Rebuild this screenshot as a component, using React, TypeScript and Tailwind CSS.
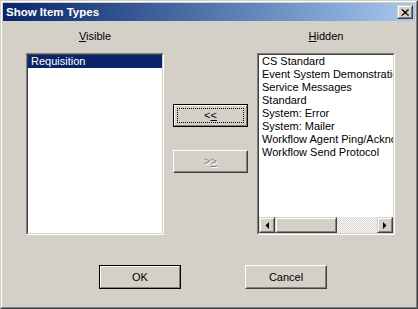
import React from "react";

function Sunken({ className, children }: { className: string; children?: React.ReactNode }) {
  return (
    <div className={"border border-t-[#808080] border-l-[#808080] border-r-white border-b-white " + className}>
      <div className="w-full h-full border border-t-[#404040] border-l-[#404040] border-r-[#d4d0c8] border-b-[#d4d0c8] bg-white flex flex-col overflow-hidden">
        {children}
      </div>
    </div>
  );
}

function Raised({ children }: { children?: React.ReactNode }) {
  return (
    <div className="w-full h-full border border-t-white border-l-white border-r-[#404040] border-b-[#404040]">
      <div className="w-full h-full border border-t-[#d4d0c8] border-l-[#d4d0c8] border-r-[#808080] border-b-[#808080] flex items-center justify-center">
        {children}
      </div>
    </div>
  );
}

function DefaultBtn({ children, focus }: { children?: React.ReactNode; focus?: boolean }) {
  return (
    <div className="w-full h-full border border-black">
      <div className="w-full h-full border border-t-white border-l-white border-r-[#808080] border-b-[#808080] p-[2px]">
        {focus ? (
          <div className="w-full h-full border border-dotted border-black flex items-center justify-center">{children}</div>
        ) : (
          <div className="w-full h-full flex items-center justify-center">{children}</div>
        )}
      </div>
    </div>
  );
}

function ScrollBtn({ dir }: { dir: "left" | "right" }) {
  return (
    <div className="w-[16px] h-[16px] shrink-0 border border-t-[#d4d0c8] border-l-[#d4d0c8] border-r-[#404040] border-b-[#404040]">
      <div className="w-full h-full border border-t-white border-l-white border-r-[#808080] border-b-[#808080] bg-[#d4d0c8] flex items-center justify-center">
        <svg width="4" height="7" viewBox="0 0 4 7">
          {dir === "left" ? (
            <polygon points="4,0 4,7 0.5,3.5" fill="#000" />
          ) : (
            <polygon points="0,0 0,7 3.5,3.5" fill="#000" />
          )}
        </svg>
      </div>
    </div>
  );
}

const hidden = [
  "CS Standard",
  "Event System Demonstration",
  "Service Messages",
  "Standard",
  "System: Error",
  "System: Mailer",
  "Workflow Agent Ping/Acknowledge",
  "Workflow Send Protocol",
];

export default function App() {
  return (
    <div className="w-[418px] h-[309px] bg-[#d4d0c8] font-['Liberation_Sans',Arial,sans-serif] text-[11px] leading-[13px] text-black select-none">
      <div className="w-full h-full border border-t-[#d4d0c8] border-l-[#d4d0c8] border-r-[#404040] border-b-[#404040]">
        <div className="w-full h-full border border-t-white border-l-white border-r-[#808080] border-b-[#808080] p-px flex flex-col">
          {/* Title bar */}
          <div className="h-[18px] shrink-0 flex items-center bg-linear-to-r from-[#0a246a] to-[#a6caf0] pl-[3px] pr-[2px]">
            <span className="flex-1 text-white font-bold text-[11.5px] leading-[14px]">Show Item Types</span>
            <div className="w-[16px] h-[14px] border border-t-[#d4d0c8] border-l-[#d4d0c8] border-r-[#404040] border-b-[#404040]">
              <div className="w-full h-full border border-t-white border-l-white border-r-[#808080] border-b-[#808080] bg-[#d4d0c8] flex items-center justify-center">
                <svg width="8" height="7" viewBox="0 0 8 7">
                  <path d="M0.5 0.5 L7 6.5 M1.5 0.5 L8 6.5 M7 0.5 L0.5 6.5 M8 0.5 L1.5 6.5" stroke="#000" strokeWidth="1" fill="none" />
                </svg>
              </div>
            </div>
          </div>

          {/* Client */}
          <div className="flex-1 flex flex-col">
            <div className="flex pl-[23px] pr-[20px] pt-[9px] gap-[9px]">
              {/* Visible */}
              <div className="w-[138px] flex flex-col">
                <div className="h-[13px] text-center">
                  <u>V</u>isible
                </div>
                <Sunken className="mt-[10px] h-[182px]">
                  <div className="h-[13px] bg-[#0a246a] text-white pl-[3px] whitespace-nowrap">Requisition</div>
                </Sunken>
              </div>

              {/* Middle buttons */}
              <div className="w-[75px] flex flex-col pt-[74px]">
                <div className="h-[23px]">
                  <DefaultBtn focus>
                    <span>
                      &lt;<u>&lt;</u>
                    </span>
                  </DefaultBtn>
                </div>
                <div className="h-[23px] mt-[23px]">
                  <Raised>
                    <span className="text-[#808080] [text-shadow:1px_1px_0_#ffffff]">
                      &gt;<u>&gt;</u>
                    </span>
                  </Raised>
                </div>
              </div>

              {/* Hidden */}
              <div className="w-[138px] flex flex-col">
                <div className="h-[13px] text-center">
                  <u>H</u>idden
                </div>
                <Sunken className="mt-[10px] h-[182px]">
                  <div className="flex-1 flex flex-col">
                    {hidden.map((t) => (
                      <div key={t} className="h-[13px] pl-[3px] whitespace-nowrap overflow-hidden">
                        {t}
                      </div>
                    ))}
                  </div>
                  <div className="h-[16px] shrink-0 flex">
                    <ScrollBtn dir="left" />
                    <div className="w-[62px] h-[16px] shrink-0 border border-t-[#d4d0c8] border-l-[#d4d0c8] border-r-[#404040] border-b-[#404040]">
                      <div className="w-full h-full border border-t-white border-l-white border-r-[#808080] border-b-[#808080] bg-[#d4d0c8]" />
                    </div>
                    <div className="flex-1 h-[16px] bg-[image:repeating-conic-gradient(#ffffff_0%_25%,#d4d0c8_0%_50%)] bg-[length:2px_2px]" />
                    <ScrollBtn dir="right" />
                  </div>
                </Sunken>
              </div>
            </div>

            {/* Bottom buttons */}
            <div className="flex mt-[30px] pl-[96px] gap-[64px]">
              <div className="w-[82px] h-[24px]">
                <DefaultBtn>
                  <span>OK</span>
                </DefaultBtn>
              </div>
              <div className="w-[82px] h-[24px]">
                <Raised>
                  <span>Cancel</span>
                </Raised>
              </div>
            </div>
          </div>
        </div>
      </div>
    </div>
  );
}
